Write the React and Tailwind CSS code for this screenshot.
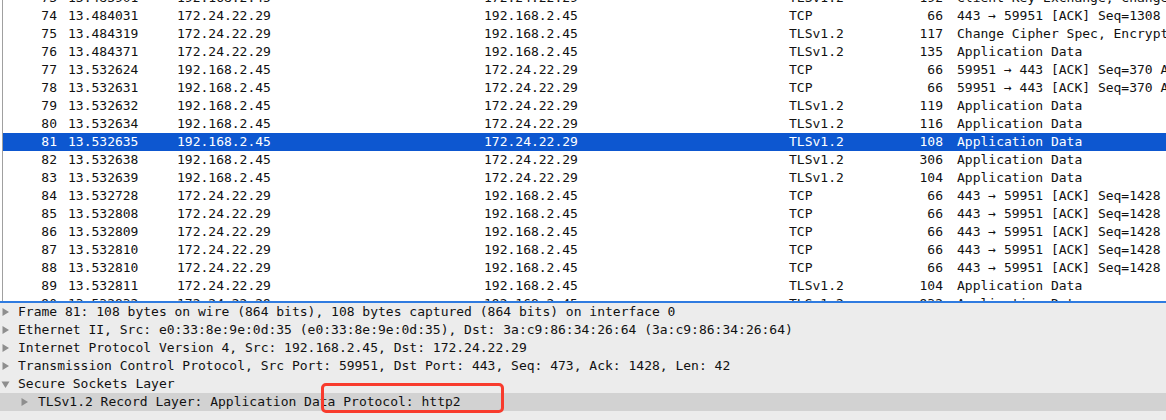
const packets = [
  ['73', '13.483901', '192.168.2.45', '172.24.22.29', 'TLSv1.2', '192', 'Client Key Exchange, Change Cipher Spec, Encrypted Handshake Message'],
  ['74', '13.484031', '172.24.22.29', '192.168.2.45', 'TCP', '66', '443 → 59951 [ACK] Seq=1308 Ack=370 Win=30080 Len=0'],
  ['75', '13.484319', '172.24.22.29', '192.168.2.45', 'TLSv1.2', '117', 'Change Cipher Spec, Encrypted Handshake Message'],
  ['76', '13.484371', '172.24.22.29', '192.168.2.45', 'TLSv1.2', '135', 'Application Data'],
  ['77', '13.532624', '192.168.2.45', '172.24.22.29', 'TCP', '66', '59951 → 443 [ACK] Seq=370 Ack=1359 Win=130944 Len=0'],
  ['78', '13.532631', '192.168.2.45', '172.24.22.29', 'TCP', '66', '59951 → 443 [ACK] Seq=370 Ack=1428 Win=130944 Len=0'],
  ['79', '13.532632', '192.168.2.45', '172.24.22.29', 'TLSv1.2', '119', 'Application Data'],
  ['80', '13.532634', '192.168.2.45', '172.24.22.29', 'TLSv1.2', '116', 'Application Data'],
  ['81', '13.532635', '192.168.2.45', '172.24.22.29', 'TLSv1.2', '108', 'Application Data'],
  ['82', '13.532638', '192.168.2.45', '172.24.22.29', 'TLSv1.2', '306', 'Application Data'],
  ['83', '13.532639', '192.168.2.45', '172.24.22.29', 'TLSv1.2', '104', 'Application Data'],
  ['84', '13.532728', '172.24.22.29', '192.168.2.45', 'TCP', '66', '443 → 59951 [ACK] Seq=1428 Ack=435 Win=30080 Len=0'],
  ['85', '13.532808', '172.24.22.29', '192.168.2.45', 'TCP', '66', '443 → 59951 [ACK] Seq=1428 Ack=485 Win=30080 Len=0'],
  ['86', '13.532809', '172.24.22.29', '192.168.2.45', 'TCP', '66', '443 → 59951 [ACK] Seq=1428 Ack=527 Win=30080 Len=0'],
  ['87', '13.532810', '172.24.22.29', '192.168.2.45', 'TCP', '66', '443 → 59951 [ACK] Seq=1428 Ack=767 Win=31104 Len=0'],
  ['88', '13.532810', '172.24.22.29', '192.168.2.45', 'TCP', '66', '443 → 59951 [ACK] Seq=1428 Ack=805 Win=31104 Len=0'],
  ['89', '13.532811', '172.24.22.29', '192.168.2.45', 'TLSv1.2', '104', 'Application Data'],
  ['90', '13.532832', '172.24.22.29', '192.168.2.45', 'TLSv1.2', '932', 'Application Data'],
];

const details = [
  { text: 'Frame 81: 108 bytes on wire (864 bits), 108 bytes captured (864 bits) on interface 0', open: false },
  { text: 'Ethernet II, Src: e0:33:8e:9e:0d:35 (e0:33:8e:9e:0d:35), Dst: 3a:c9:86:34:26:64 (3a:c9:86:34:26:64)', open: false },
  { text: 'Internet Protocol Version 4, Src: 192.168.2.45, Dst: 172.24.22.29', open: false },
  { text: 'Transmission Control Protocol, Src Port: 59951, Dst Port: 443, Seq: 473, Ack: 1428, Len: 42', open: false },
  { text: 'Secure Sockets Layer', open: true },
  { text: 'TLSv1.2 Record Layer: Application Data Protocol: http2', open: false, child: true, selected: true },
];

function Arrow({ open }) {
  return (
    <svg width="9" height="10" viewBox="0 0 9 10" className="shrink-0">
      {open ? <path d="M0.5 2.5 L8.5 2.5 L4.5 9 Z" fill="#8e8e8e" /> : <path d="M1.5 1 L8 5 L1.5 9 Z" fill="#8e8e8e" />}
    </svg>
  );
}

export default function App() {
  return (
    <div className="relative h-[420px] w-[1166px] overflow-hidden bg-white text-[13px] leading-[18px] text-[#111]" style={{ fontFamily: '"DejaVu Sans Mono", "Liberation Mono", monospace' }}>
      {/* packet list */}
      <div className="ml-[2px] h-[301px] overflow-hidden border-l border-[#a0a0a0]">
        <div className="mt-[-11px]">
          {packets.map((p) => {
            const sel = p[0] === '81';
            return (
              <div key={p[0]} className={`grid h-[18px] grid-cols-[54px_120px_307px_305px_111px_43px_1fr] whitespace-nowrap ${sel ? 'bg-[#0d57d0] text-white' : ''}`}>
                <span className="text-right">{p[0]}</span>
                <span className="pl-[11px]">{p[1]}</span>
                <span>{p[2]}</span>
                <span>{p[3]}</span>
                <span>{p[4]}</span>
                <span className="text-right">{p[5]}</span>
                <span className="overflow-hidden pl-[14px]">{p[6]}</span>
              </div>
            );
          })}
        </div>
      </div>

      {/* divider */}
      <div className="h-[2px] bg-[#2f7be0]" />

      {/* detail pane */}
      <div className="h-[117px] bg-[#ececec]">
        {details.map((d) => (
          <div key={d.text} className={`flex h-[18px] items-center whitespace-nowrap ${d.selected ? 'bg-[#d2d2d2]' : ''} ${d.child ? 'pl-[20px]' : 'pl-[1px]'}`}>
            <Arrow open={d.open} />
            <span className={d.child ? 'pl-[9px]' : 'pl-[8px]'}>{d.text}</span>
          </div>
        ))}
      </div>

      {/* annotation */}
      <div className="absolute left-[321px] top-[383px] h-[30px] w-[183px] rounded-[5px] border-[3.5px] border-[#f83b2d]" />
    </div>
  );
}
